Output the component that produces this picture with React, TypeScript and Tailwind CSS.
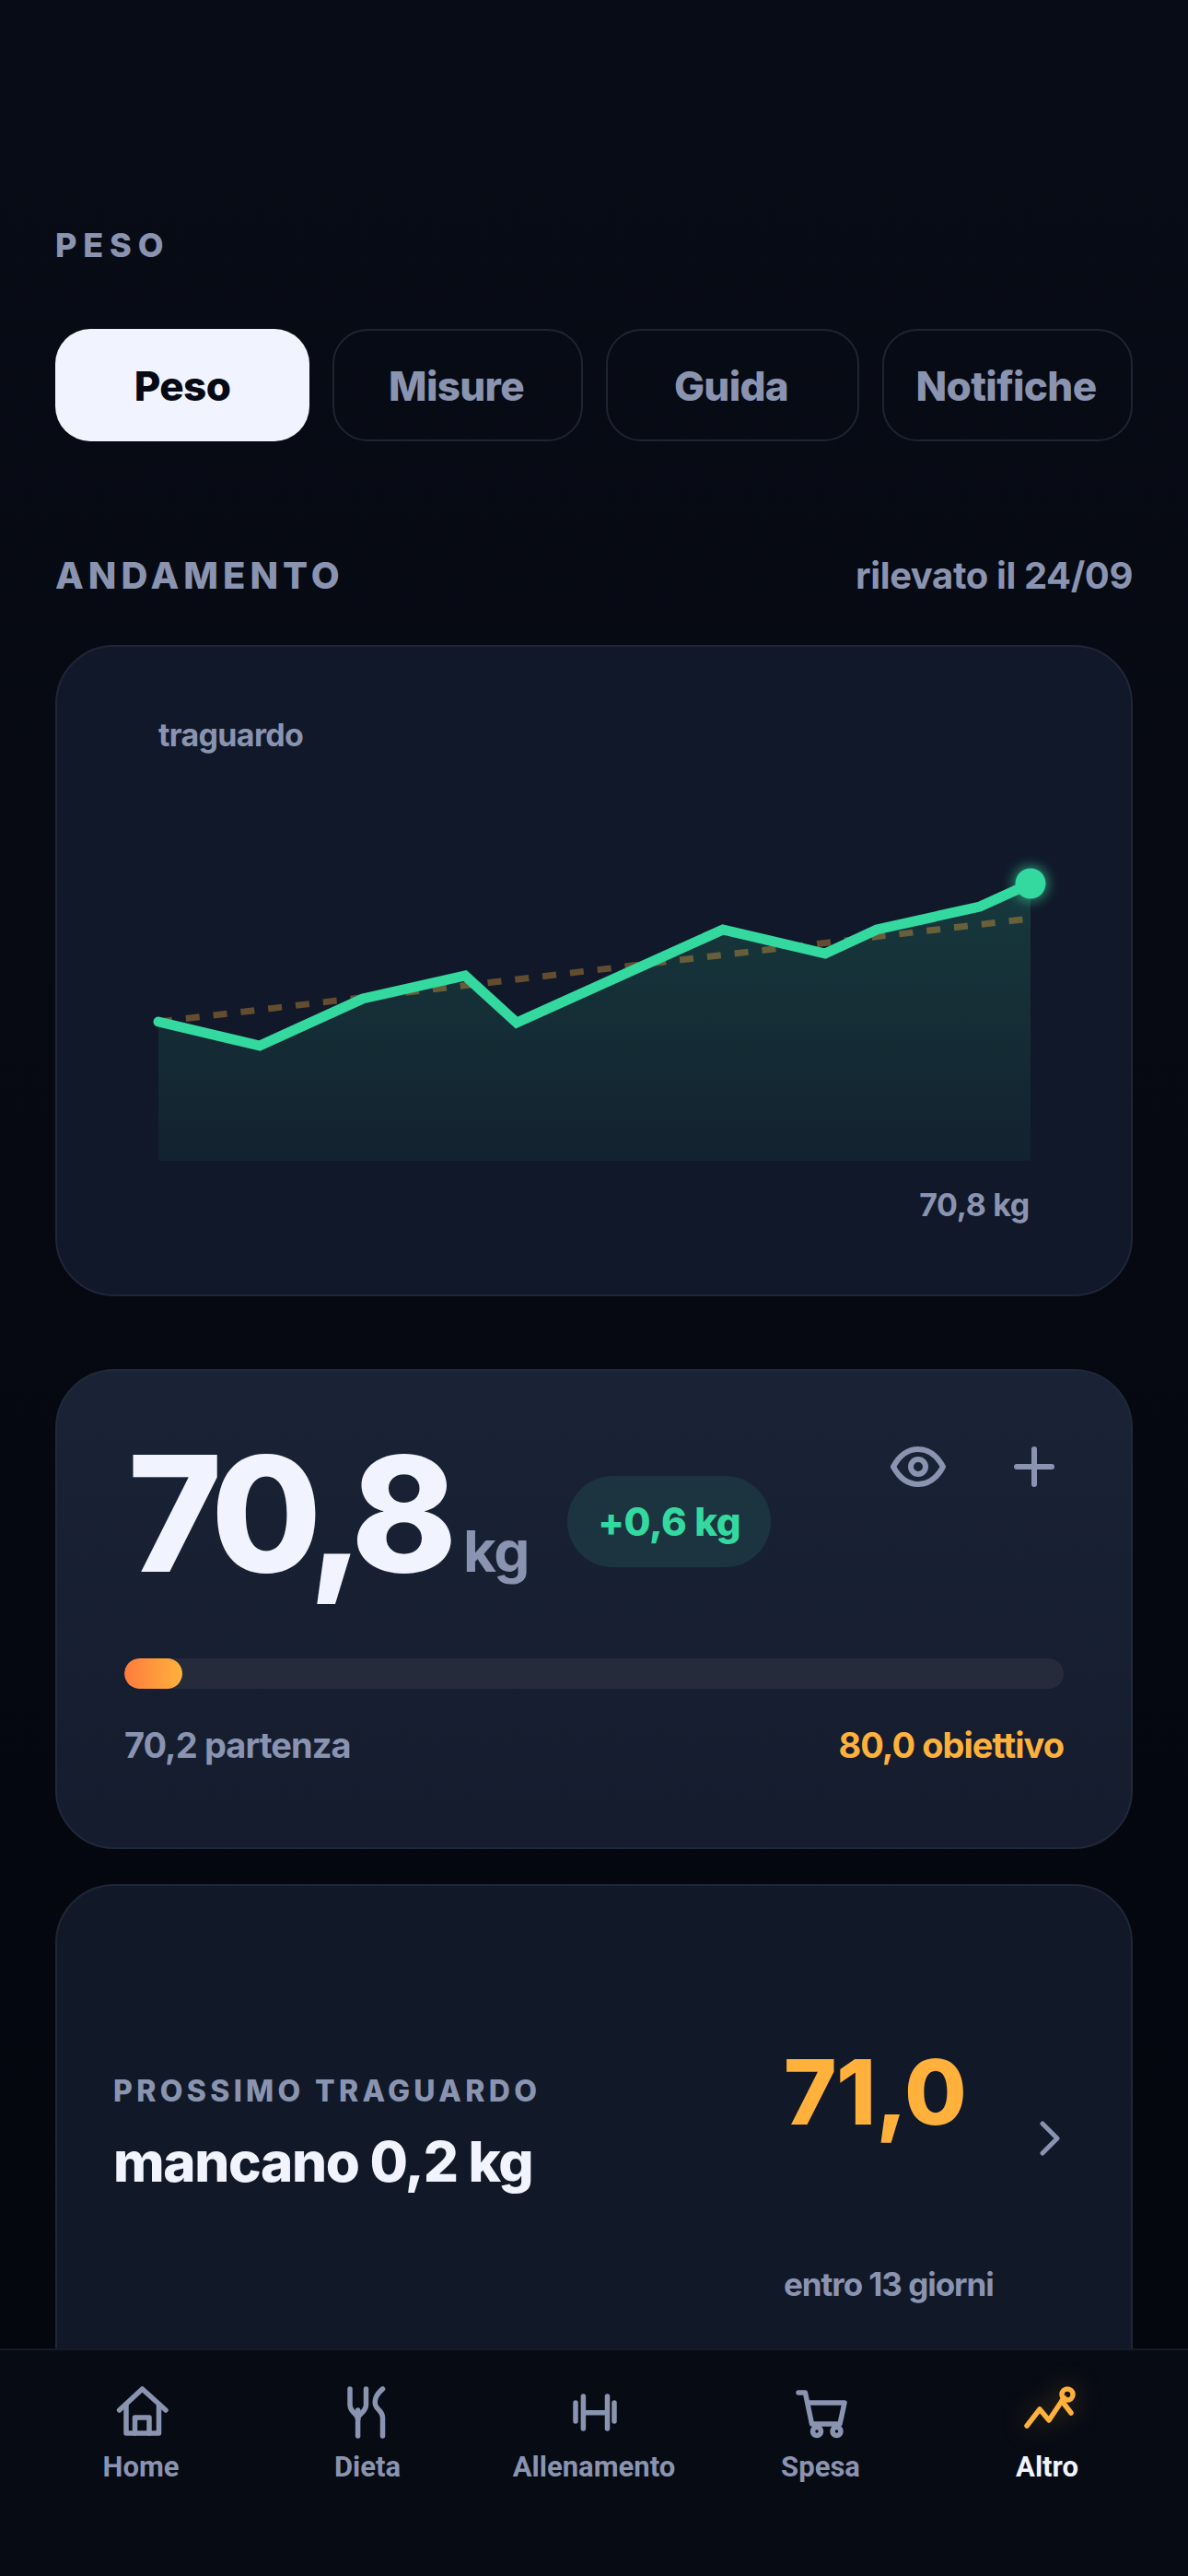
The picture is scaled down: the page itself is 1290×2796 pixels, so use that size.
import React from "react";

const pts: [number, number][] = [[2,171],[112,197],[224,146],[335,121],[391,172],[615,71],[726,97],[782,71],[894,46],[949,21]];
const line = pts.map((p) => p.join(",")).join(" ");

function Chart() {
  return (
    <svg viewBox="0 0 950 322" className="block w-[950px] h-[322px] overflow-visible mt-[120px] ml-[-2px]">
      <defs>
        <linearGradient id="area" x1="0" y1="0" x2="0" y2="1">
          <stop offset="0" stopColor="#34d9a0" stopOpacity="0.17" />
          <stop offset="1" stopColor="#34d9a0" stopOpacity="0.05" />
        </linearGradient>
        <filter id="glow" x="-100%" y="-100%" width="300%" height="300%">
          <feGaussianBlur stdDeviation="7" />
        </filter>
      </defs>
      <polygon points={`2,171 ${line} 949,322 2,322`} fill="url(#area)" />
      <line x1="2" y1="171" x2="949" y2="59" stroke="#ffb13c" strokeOpacity="0.35" strokeWidth="7" strokeDasharray="15 15" />
      <polyline points={line} fill="none" stroke="#34d9a0" strokeWidth="11" strokeLinejoin="miter" strokeLinecap="round" />
      <circle cx="949" cy="21" r="18" fill="#34d9a0" opacity="0.7" filter="url(#glow)" />
      <circle cx="949" cy="21" r="16.5" fill="#34d9a0" />
    </svg>
  );
}

function Item({ label, active, children }: { label: string; active?: boolean; children: React.ReactNode }) {
  return (
    <div className="flex flex-col items-center pt-[35px]">
      <svg viewBox="0 0 64 64" className={active ? "w-[64px] h-[64px] text-[#ffb13c] drop-shadow-[0_0_14px_rgba(255,177,60,0.3)]" : "w-[64px] h-[64px] text-[#8a94b0]"} fill="none" stroke="currentColor" strokeWidth="5.5" strokeLinecap="round" strokeLinejoin="round">
        {children}
      </svg>
      <span className={active ? "mt-[10px] text-[31px] leading-[36px] font-bold text-[#f1f4ff] font-['Roboto']" : "mt-[10px] text-[31px] leading-[36px] font-bold text-[#8a94b0] font-['Roboto']"}>{label}</span>
    </div>
  );
}

export default function App() {
  return (
    <div className="relative w-[1290px] h-[2796px] overflow-hidden bg-gradient-to-b from-[#080c16] to-[#04060d] font-['Inter',sans-serif] text-[#8a94b0]">
      <main className="px-[60px] pt-[244px]">
        <div className="text-[36px] leading-[44px] font-extrabold tracking-[0.19em]">PESO</div>

        <div className="flex gap-[25px] mt-[69px] text-[44px] font-extrabold tracking-[-0.015em]">
          <div className="w-[276px] h-[122px] pt-[2px] rounded-[38px] bg-[#f1f4ff] text-[#060a14] flex items-center justify-center">Peso</div>
          <div className="w-[272px] h-[122px] pt-[2px] pr-[3px] rounded-[38px] border-2 border-[#1f2433] flex items-center justify-center">Misure</div>
          <div className="w-[275px] h-[122px] pt-[2px] pr-[3px] rounded-[38px] border-2 border-[#1f2433] flex items-center justify-center">Guida</div>
          <div className="w-[272px] h-[122px] pt-[2px] pr-[3px] rounded-[38px] border-2 border-[#1f2433] flex items-center justify-center">Notifiche</div>
        </div>

        <div className="flex items-center justify-between mt-[122px] h-[48px]">
          <span className="text-[40px] font-extrabold tracking-[0.125em]">ANDAMENTO</span>
          <span className="text-[40px] font-bold tracking-[-0.01em]">rilevato il 24/09</span>
        </div>

        <section className="mt-[51px] h-[707px] rounded-[64px] border-2 border-[#1e2638] bg-[#111829] px-[110px] pt-[76px]">
          <div className="text-[34px] leading-[40px] font-bold tracking-[-0.02em]">traguardo</div>
          <Chart />
          <div className="mt-[28px] text-[34px] leading-[40px] font-bold tracking-[-0.01em] text-right">70,8 kg</div>
        </section>

        <section className="mt-[79px] h-[521px] rounded-[64px] border-2 border-[#20293a] bg-gradient-to-b from-[#1a2335] to-[#141c2e] px-[73px] pt-[67px]">
          <div className="flex items-center h-[176px]">
            <div className="flex items-baseline ml-[4px]">
              <span className="text-[174px] leading-[176px] font-extrabold tracking-[-0.055em] text-[#f1f4ff]">70,8</span>
              <span className="ml-[16px] text-[62px] font-bold tracking-[-0.02em]">kg</span>
            </div>
            <div className="ml-[42px] mt-[16px] w-[221px] h-[99px] rounded-[50px] bg-[#1c3440] flex items-center justify-center text-[42px] font-extrabold tracking-[-0.01em] text-[#34d9a0]">+0,6 kg</div>
            <div className="ml-auto mr-[10px] self-start mt-[15px] flex items-center gap-[74px]">
              <svg viewBox="0 0 60 44" className="w-[60px] h-[44px]" fill="none" stroke="#8a94b0" strokeWidth="6" strokeLinecap="round" strokeLinejoin="round">
                <path d="M3 22C10 9 19 3 30 3s20 6 27 19c-7 13-16 19-27 19S10 35 3 22Z" />
                <circle cx="30" cy="22" r="8" />
              </svg>
              <svg viewBox="0 0 44 44" className="w-[44px] h-[44px]" fill="none" stroke="#8a94b0" strokeWidth="6" strokeLinecap="round">
                <path d="M22 3v38M3 22h38" />
              </svg>
            </div>
          </div>
          <div className="mt-[69px] h-[33px] rounded-full bg-[#262b3b] overflow-hidden">
            <div className="w-[63px] h-full rounded-full bg-gradient-to-r from-[#ff7a3d] to-[#ffb13c]" />
          </div>
          <div className="mt-[38px] flex justify-between text-[38px] leading-[46px] font-bold tracking-[-0.025em]">
            <span>70,2 partenza</span>
            <span className="text-[#ffb13c]">80,0 obiettivo</span>
          </div>
        </section>

        <section className="mt-[38px] h-[640px] rounded-[64px] border-2 border-[#1e2638] bg-[#111929] pl-[61px] pb-[88px] flex items-center">
          <div className="w-[730px]">
            <div className="text-[32px] leading-[40px] font-extrabold tracking-[0.135em] mt-[-10px]">PROSSIMO TRAGUARDO</div>
            <div className="mt-[20px] text-[60px] leading-[72px] font-extrabold tracking-[-0.022em] text-[#f1f4ff]">mancano 0,2 kg</div>
          </div>
          <div className="w-[275px] mt-[82px] ml-[-2px] mr-[2px]">
            <div className="text-[98px] leading-[96px] font-extrabold tracking-[-0.005em] text-[#ffb13c]">71,0</div>
            <div className="mt-[138px] text-[35px] leading-[44px] font-bold tracking-[-0.03em]">entro 13 giorni</div>
          </div>
          <svg viewBox="0 0 24 38" className="w-[24px] h-[38px]" fill="none" stroke="#8a94b0" strokeWidth="5" strokeLinecap="round" strokeLinejoin="round">
            <path d="M4 3l16 16L4 35" />
          </svg>
        </section>
      </main>

      <nav className="absolute left-0 right-0 bottom-0 h-[247px] border-t-2 border-[#161b28] bg-[#070b14] grid grid-cols-5 px-[30px]">
        <Item label="Home">
          <path d="M8.6 30 33.5 7 59 30" />
          <path d="M16 24V55H51.5V24" />
          <path d="M25.5 55V38H41V55" />
        </Item>
        <Item label="Dieta">
          <path d="M13 7V24C13 33 21.6 33 21.6 40C21.6 33 30.5 33 30.5 24V7" />
          <path d="M21.6 30V58" />
          <path d="M48.5 7C41 13 38 21 42 27C46 32 48.5 33 48.5 38V58" />
        </Item>
        <Item label="Allenamento">
          <path d="M12 22V42M20.4 15V50M46.5 15V50M54 22V42M20.4 32.7H46.5" />
        </Item>
        <Item label="Spesa">
          <path d="M8 11H15.4L22.5 45H53L58 22H18" />
          <circle cx="28" cy="53" r="4.5" />
          <circle cx="49.5" cy="53" r="4.5" />
        </Item>
        <Item label="Altro" active>
          <path d="M10 47 24 29 34 41 48 20 58 33" />
          <path d="M48 20 51 17" />
          <circle cx="54" cy="13" r="6" />
        </Item>
      </nav>
    </div>
  );
}
